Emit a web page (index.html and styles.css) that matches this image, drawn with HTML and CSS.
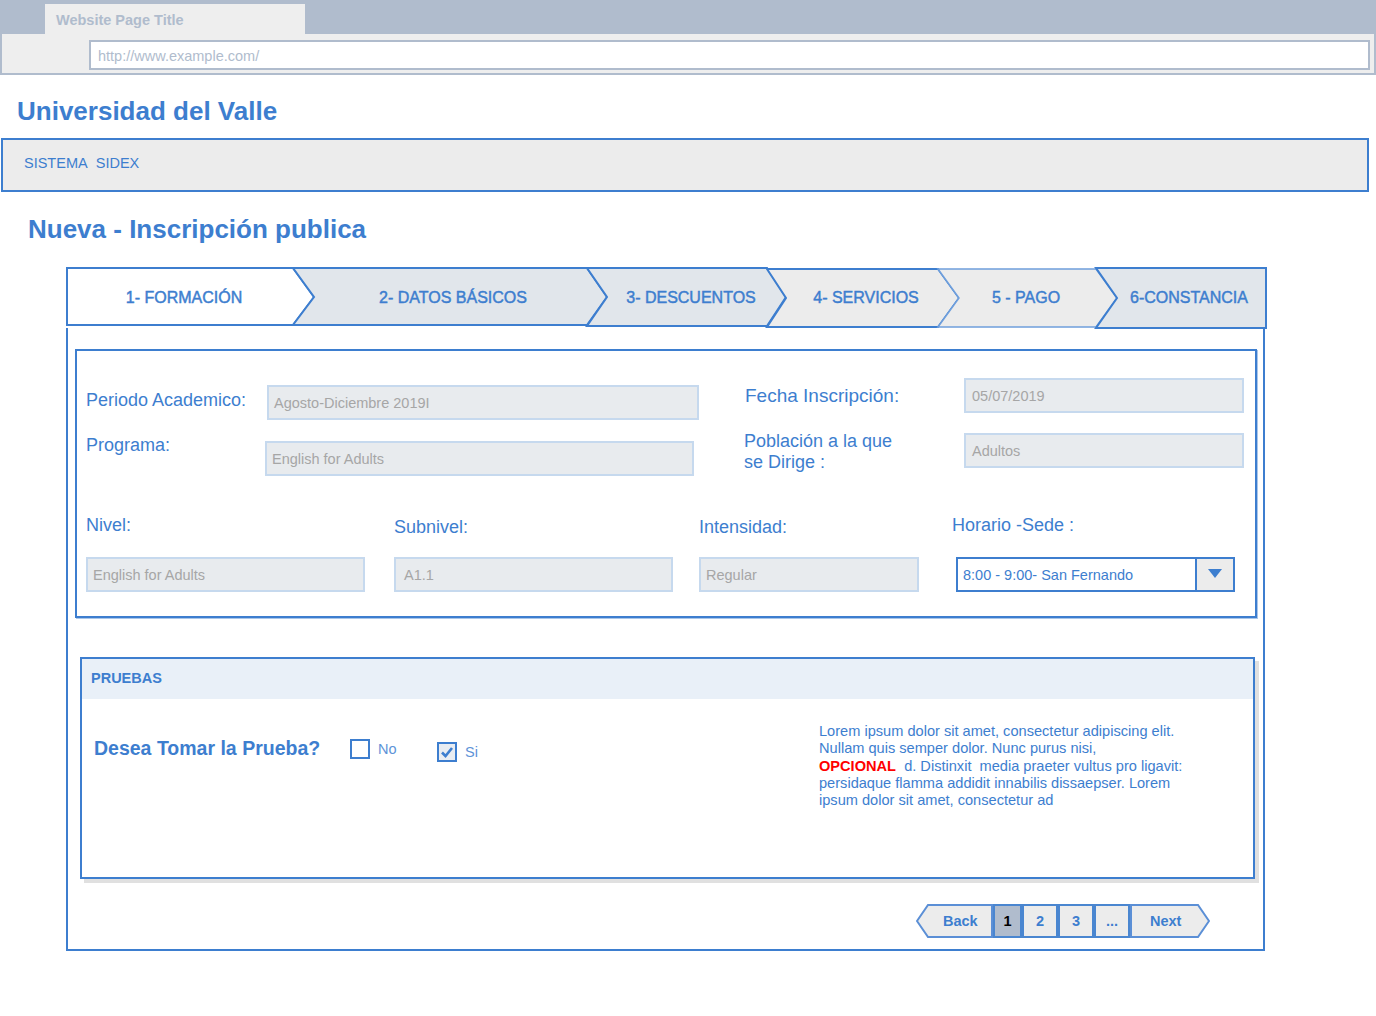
FILE: index.html
```html
<!DOCTYPE html>
<html lang="es">
<head>
<meta charset="utf-8">
<title>Nueva - Inscripción publica</title>
<link rel="stylesheet" href="styles.css">
</head>
<body>
<div class="chrome">
  <div class="tabbar"><div class="tab">Website Page Title</div></div>
  <div class="addressbar"><div class="url">http://www.example.com/</div></div>
</div>

<h1 class="brand">Universidad del Valle</h1>
<div class="sysbar">SISTEMA&nbsp; SIDEX</div>
<h2 class="page-title">Nueva - Inscripción publica</h2>

<div class="wizard">
  <div class="steps">
    <svg class="steps-bg" width="1202" height="62" viewBox="0 0 1202 62">
      <g stroke="#3d7ecf" stroke-width="2" stroke-linejoin="miter">
        <polygon points="1,1 227,1 248,30 227,58 1,58" fill="#ffffff"/>
        <polygon points="227,1 521,1 541,30 521,58 227,58 248,30" fill="#e1e6eb"/>
        <polygon points="521,1 701,1 720,30 701,59 521,59 541,30" fill="#e1e6eb"/>
        <polygon points="701,2 872,2 893,31 872,60 701,60 720,31" fill="#ececec"/>
        <polygon points="872,2 1030,2 1051,31 1030,60 872,60 893,31" fill="#ececec" stroke="#6f9fdc" stroke-width="1.5"/>
        <polygon points="1030,1 1200,1 1200,61 1030,61 1051,31" fill="#e1e6eb"/>
      </g>
    </svg>
    <div class="step-labels">
      <span class="step">1- FORMACIÓN</span>
      <span class="step">2- DATOS BÁSICOS</span>
      <span class="step">3- DESCUENTOS</span>
      <span class="step">4- SERVICIOS</span>
      <span class="step">5 - PAGO</span>
      <span class="step step-last">6-CONSTANCIA</span>
    </div>
  </div>

  <div class="panel">
    <section class="box form-box">
      <div class="top-fields">
        <div class="col-left">
          <div class="field-row">
            <label class="lbl lbl-periodo">Periodo Academico:</label>
            <div class="input in-periodo">Agosto-Diciembre 2019I</div>
          </div>
          <div class="field-row row2">
            <label class="lbl lbl-programa">Programa:</label>
            <div class="input in-programa">English for Adults</div>
          </div>
        </div>
        <div class="col-right">
          <div class="field-row center">
            <label class="lbl lbl-right lbl-fecha">Fecha Inscripción:</label>
            <div class="input in-right">05/07/2019</div>
          </div>
          <div class="field-row row2r">
            <label class="lbl lbl-right lbl-two">Población a la que<br>se Dirige :</label>
            <div class="input in-right">Adultos</div>
          </div>
        </div>
      </div>

      <div class="bottom-fields">
        <div class="bcol">
          <label class="lbl blbl">Nivel:</label>
          <div class="input in-nivel">English for Adults</div>
        </div>
        <div class="bcol">
          <label class="lbl blbl low">Subnivel:</label>
          <div class="input in-nivel in-sub">A1.1</div>
        </div>
        <div class="bcol">
          <label class="lbl blbl low">Intensidad:</label>
          <div class="input in-int">Regular</div>
        </div>
        <div class="bcol">
          <label class="lbl blbl">Horario -Sede :</label>
          <div class="select">
            <span class="select-text">8:00 - 9:00- San Fernando</span>
            <span class="select-btn">
              <svg width="14" height="9" viewBox="0 0 14 9"><polygon points="0,0 14,0 7,9" fill="#3d7ecf"/></svg>
            </span>
          </div>
        </div>
      </div>
    </section>

    <section class="box pruebas">
      <div class="pruebas-head">PRUEBAS</div>
      <div class="pruebas-body">
        <div class="question-row">
          <span class="question">Desea Tomar la Prueba?</span>
          <span class="choice choice-no">
            <svg width="20" height="20" viewBox="0 0 20 20"><rect x="1" y="1" width="18" height="18" fill="#ffffff" stroke="#3d7ecf" stroke-width="2"/></svg>
            <span class="choice-text">No</span>
          </span>
          <span class="choice choice-si">
            <svg width="20" height="20" viewBox="0 0 20 20"><rect x="1" y="1" width="18" height="18" fill="#e9edf2" stroke="#3d7ecf" stroke-width="2"/><path d="M5 10.5 L8.5 14 L15 6" fill="none" stroke="#3d7ecf" stroke-width="2.6"/></svg>
            <span class="choice-text">Si</span>
          </span>
        </div>
        <p class="lorem">Lorem ipsum dolor sit amet, consectetur adipiscing elit.<br>Nullam quis semper dolor. Nunc purus nisi,<br><b class="opcional">OPCIONAL</b>&nbsp; d. Distinxit&nbsp; media praeter vultus pro ligavit:<br>persidaque flamma addidit innabilis dissaepser. Lorem<br>ipsum dolor sit amet, consectetur ad</p>
      </div>
    </section>

    <nav class="pager">
      <a class="pg-arrow pg-back">
        <svg width="77" height="34" viewBox="0 0 77 34"><polygon points="12,1 76,1 76,33 12,33 1,17" fill="#ececec" stroke="#5b8fd6" stroke-width="2"/></svg>
        <span class="pg-label back-label">Back</span>
      </a>
      <a class="pg pg-current">1</a>
      <a class="pg pg-w">2</a>
      <a class="pg pg-w">3</a>
      <a class="pg pg-w">...</a>
      <a class="pg-arrow pg-next">
        <svg width="80" height="34" viewBox="0 0 80 34"><polygon points="1,1 68,1 79,17 68,33 1,33" fill="#ececec" stroke="#5b8fd6" stroke-width="2"/></svg>
        <span class="pg-label next-label">Next</span>
      </a>
    </nav>
  </div>
</div>
</body>
</html>
```

FILE: styles.css
```css
* { box-sizing: border-box; }

body {
  margin: 0;
  background: #ffffff;
  font-family: "Liberation Sans", Arial, sans-serif;
  font-size: 14.5px;
  color: #3d7ecf;
}

/* browser chrome */
.chrome { width: 1376px; }
.tabbar {
  height: 34px;
  background: #b0bccd;
  padding: 4px 0 0 45px;
}
.tab {
  width: 260px;
  height: 30px;
  background: #eeeeee;
  padding: 2px 0 0 11px;
  line-height: 28px;
  font-weight: bold;
  font-size: 14.5px;
  color: #b0bccd;
}
.addressbar {
  height: 41px;
  background: #eeeeee;
  border: 2px solid #b0bccd;
  border-top: 0;
  padding: 6px 0 0 87px;
}
.url {
  width: 1281px;
  height: 30px;
  background: #ffffff;
  border: 2px solid #b0bccd;
  padding: 1px 0 0 7px;
  line-height: 26px;
  color: #b0bccd;
  font-size: 14.5px;
}

/* headings */
.brand {
  margin: 21px 0 0 17px;
  font-size: 26px;
  line-height: 30px;
  font-weight: bold;
  color: #3d7ecf;
}
.sysbar {
  margin: 12px 0 0 1px;
  width: 1368px;
  height: 54px;
  border: 2px solid #3d7ecf;
  background: #ececec;
  padding: 0 0 4px 21px;
  line-height: 46px;
  font-size: 14.5px;
  color: #3d7ecf;
}
.page-title {
  margin: 22px 0 0 28px;
  font-size: 26px;
  line-height: 30px;
  font-weight: bold;
  color: #3d7ecf;
}

/* wizard */
.wizard { margin: 23px 0 0 66px; }
.steps {
  display: grid;
  width: 1202px;
  height: 61px;
}
.steps > * { grid-area: 1 / 1; }
.steps-bg { display: block; }
.step-labels {
  display: grid;
  grid-template-columns: 236px 302px 174px 176px 144px 170px;
  align-items: center;
  height: 61px;
}
.step {
  text-align: center;
  font-size: 16px;
  line-height: 20px;
  color: #3d7ecf;
  -webkit-text-stroke: 0.45px #3d7ecf;
}
.step-last { padding-left: 12px; }

.panel {
  width: 1199px;
  border: 2px solid #3d7ecf;
  border-top: 0;
  padding: 21px 6px 11px 7px;
}

.box {
  border: 2px solid #3d7ecf;
  background: #ffffff;
}

/* form box */
.form-box {
  width: 1182px;
  padding: 27px 0 24px 9px;
  box-shadow: 1px 1px 0 #a9c6ea;
}
.top-fields { display: flex; }
.col-left { width: 613px; margin-top: 7px; }
.col-right { margin-left: 45px; }
.field-row { display: flex; align-items: flex-start; }
.field-row.center { align-items: center; }
.row2 { margin-top: 21px; }
.row2r { margin-top: 20px; }

.lbl {
  font-size: 18px;
  line-height: 20px;
  color: #3d7ecf;
}
.lbl-periodo { width: 181px; margin-top: 5px; }
.lbl-programa { width: 179px; margin-top: -6px; }
.lbl-right { width: 220px; }
.lbl-fecha { font-size: 19px; padding-left: 1px; }
.lbl-two { line-height: 21px; margin-top: -2px; }

.input {
  height: 35px;
  background: #e8ebee;
  border: 2px solid #c6d9ee;
  padding: 1px 0 0 5px;
  line-height: 31px;
  font-size: 14.5px;
  color: #a6a6a6;
  white-space: nowrap;
}
.in-periodo { width: 432px; }
.in-programa { width: 429px; }
.in-right { width: 280px; padding-left: 6px; }

.bottom-fields {
  display: grid;
  grid-template-columns: 308px 305px 253px 1fr;
  margin-top: 39px;
}
.bcol { display: flex; flex-direction: column; }
.blbl { height: 42px; }
.blbl.low { padding-top: 2px; }
.in-nivel { width: 279px; }
.in-sub { padding-left: 8px; }
.in-int { width: 220px; }

.select {
  display: flex;
  width: 279px;
  height: 35px;
  margin-left: 4px;
  border: 2px solid #3d7ecf;
  background: #ffffff;
}
.select-text {
  flex: 1;
  padding: 1px 0 0 5px;
  line-height: 31px;
  font-size: 14.5px;
  color: #3d7ecf;
  white-space: nowrap;
}
.select-btn {
  width: 38px;
  border-left: 2px solid #3d7ecf;
  background: #ececec;
  display: flex;
  align-items: center;
  justify-content: center;
  padding-bottom: 2px;
}
.select-btn svg { display: block; }

/* pruebas */
.pruebas {
  width: 1175px;
  margin: 39px 0 0 5px;
  box-shadow: 4px 4px 0 #e0e0e0;
}
.pruebas-head {
  height: 40px;
  background: #e9f0f8;
  padding-left: 9px;
  line-height: 39px;
  font-weight: bold;
  font-size: 14.5px;
  color: #3d7ecf;
}
.pruebas-body {
  display: flex;
  align-items: flex-start;
  height: 178px;
  padding: 23px 0 0 12px;
}
.question-row {
  display: flex;
  align-items: center;
  width: 725px;
  height: 22px;
  margin-top: 15px;
}
.question {
  width: 256px;
  font-size: 19.5px;
  line-height: 22px;
  font-weight: bold;
  color: #3d7ecf;
  white-space: nowrap;
}
.choice { display: flex; align-items: center; }
.choice svg { display: block; }
.choice-no { width: 87px; margin-top: 1px; }
.choice-si { margin-top: 7px; }
.choice-text {
  margin-left: 8px;
  font-size: 14.5px;
  color: #5e93d8;
}
.lorem {
  margin: 0;
  padding-top: 1px;
  font-size: 14.6px;
  line-height: 17.3px;
  color: #3d7ecf;
  white-space: nowrap;
}
.opcional {
  color: #ff0000;
  font-weight: bold;
}

/* pager */
.pager {
  display: flex;
  justify-content: flex-end;
  margin-top: 25px;
  padding-right: 47px;
  height: 34px;
}
.pg-arrow {
  display: grid;
  height: 34px;
}
.pg-arrow > * { grid-area: 1 / 1; }
.pg-arrow svg { display: block; }
.pg-label {
  align-self: center;
  font-weight: bold;
  font-size: 14.5px;
  color: #3d7ecf;
}
.back-label { justify-self: start; margin-left: 27px; }
.next-label { justify-self: start; margin-left: 20px; }
.pg {
  height: 34px;
  border: 2px solid #4a86d0;
  background: #ececec;
  text-align: center;
  line-height: 30px;
  font-weight: bold;
  font-size: 14.5px;
  color: #3d7ecf;
}
.pg-current {
  width: 29px;
  background: #b0bccd;
  color: #000000;
}
.pg-w { width: 36px; }
```
